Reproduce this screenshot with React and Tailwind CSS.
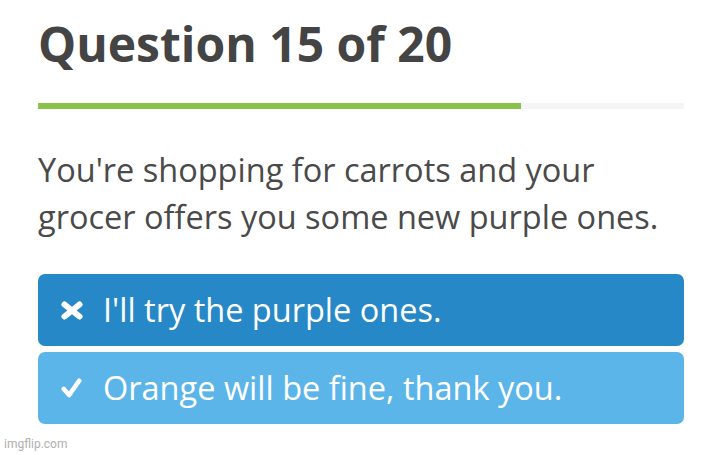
import React from "react";

function TimesIcon() {
  return (
    <svg width="22" height="19" viewBox="0 0 22 19" className="shrink-0">
      <g stroke="white" strokeWidth="6" strokeLinecap="round">
        <line x1="3.5" y1="3.5" x2="18.5" y2="15.5" />
        <line x1="18.5" y1="3.5" x2="3.5" y2="15.5" />
      </g>
    </svg>
  );
}

function CheckIcon() {
  return (
    <svg width="21" height="20" viewBox="0 0 21 20" className="shrink-0">
      <polyline points="2.8,11 8.2,17 18.2,2.8" fill="none" stroke="white" strokeWidth="4.6" strokeLinecap="round" strokeLinejoin="round" />
    </svg>
  );
}

export default function App() {
  return (
    <div className="relative w-[720px] h-[455px] bg-white overflow-hidden" style={{ fontFamily: '"Open Sans", sans-serif' }}>
      <div className="pl-[38px] pt-[11px] w-[720px] pr-[36px]">
        <h1 className="text-[48px] leading-[66px] font-bold text-[#444444]">Question 15 of 20</h1>
        <div className="mt-[26px] h-[6px] bg-[#f5f5f5] flex">
          <div className="h-full bg-[#8bc34a] w-[74.8%]" />
        </div>
        <p className="mt-[37px] text-[32.5px] leading-[47px] text-[#4a4a4a]">
          You're shopping for carrots and your grocer offers you some new purple ones.
        </p>
        <div className="mt-[34px] flex flex-col gap-[6px]">
          <div className="h-[72px] rounded-[7px] bg-[#2688c6] flex items-center pl-[23px] text-white">
            <span className="w-[42px] flex items-center"><TimesIcon /></span>
            <span className="text-[32.5px] leading-[44px]">I'll try the purple ones.</span>
          </div>
          <div className="h-[72px] rounded-[7px] bg-[#5bb5e9] flex items-center pl-[23px] text-white">
            <span className="w-[42px] flex items-center"><CheckIcon /></span>
            <span className="text-[32.5px] leading-[44px]">Orange will be fine, thank you.</span>
          </div>
        </div>
      </div>
      <div className="absolute left-[4px] bottom-[2px] text-[12px] text-[#b0b0b0]" style={{ fontFamily: "Roboto, sans-serif" }}>imgflip.com</div>
    </div>
  );
}
